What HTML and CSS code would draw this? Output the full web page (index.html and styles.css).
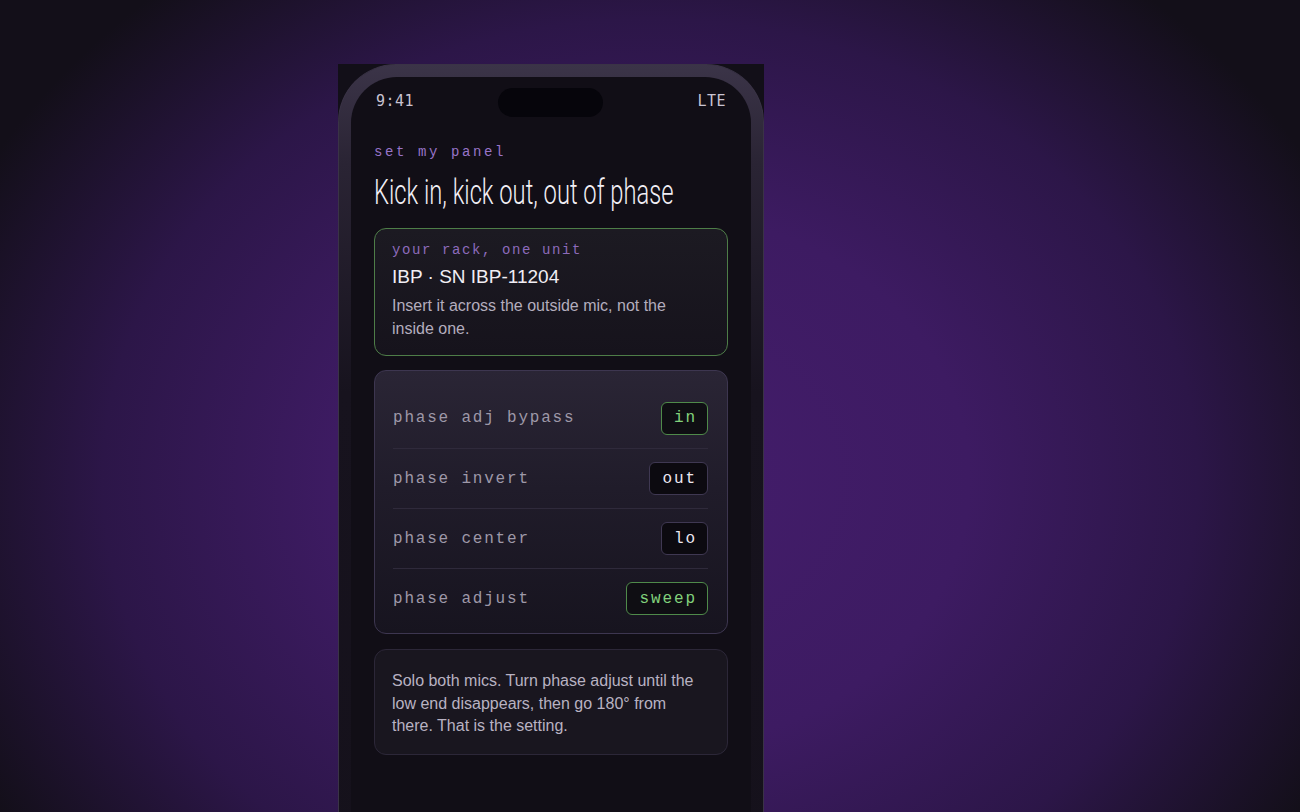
FILE: index.html
```html
<!DOCTYPE html>
<html lang="en">
<head>
<meta charset="utf-8">
<title>set my panel</title>
<link rel="stylesheet" href="styles.css">
</head>
<body>
<div class="stage">
  <div class="device">
    <div class="frame">
      <div class="screen">
        <div class="status">
          <span class="time">9:41</span>
          <span class="island"></span>
          <span class="net">LTE</span>
        </div>
        <div class="content">
          <div class="eyebrow">set my panel</div>
          <h1 class="title"><span class="title-text">Kick in, kick out, out of phase</span></h1>
          <section class="card unit">
            <div class="unit-label">your rack, one unit</div>
            <div class="unit-name">IBP · SN IBP-11204</div>
            <p class="unit-desc">Insert it across the outside mic, not the inside one.</p>
          </section>
          <section class="card controls">
            <div class="row"><span class="label">phase adj bypass</span><span class="pill on">in</span></div>
            <div class="row"><span class="label">phase invert</span><span class="pill">out</span></div>
            <div class="row"><span class="label">phase center</span><span class="pill">lo</span></div>
            <div class="row"><span class="label">phase adjust</span><span class="pill on">sweep</span></div>
          </section>
          <section class="card note">
            <p>Solo both mics. Turn phase adjust until the low end disappears, then go 180° from there. That is the setting.</p>
          </section>
        </div>
      </div>
    </div>
  </div>
</div>
</body>
</html>
```
FILE: styles.css
```css
* { box-sizing: border-box; }
html, body { margin: 0; padding: 0; }
body {
  width: 1300px;
  height: 812px;
  overflow: hidden;
  background: radial-gradient(ellipse 760px 640px at 650px 480px, #441d6c 0%, #3d1b62 42%, #2c1648 72%, #130f19 100%);
  font-family: "Liberation Sans", Arial, sans-serif;
}
.stage {
  padding: 64px 0 0 338px;
}
.device {
  width: 426px;
  height: 820px;
  background: #120f18;
}
.frame {
  height: 100%;
  border-radius: 58px 58px 0 0;
  padding: 12px 12px 0 12px;
  border: 1px solid #3a3346;
  border-bottom: none;
  background: linear-gradient(180deg, #3b3448 0%, #2a2434 12%, #17131e 40%, #15111b 100%);
}
.screen {
  height: 100%;
  border-radius: 46px 46px 0 0;
  background: #110e16;
  padding: 0 23px;
}
.status {
  display: grid;
  grid-template-columns: 1fr auto 1fr;
  align-items: center;
  height: 48px;
  padding: 0 2px 0 2px;
  font-family: "DejaVu Sans Mono", monospace;
  font-size: 15px;
  color: #c9c3d2;
  letter-spacing: 0.5px;
}
.net { justify-self: end; }
.island {
  width: 105px;
  height: 29px;
  border-radius: 15px;
  background: #06050b;
  margin-top: 2px;
  margin-left: -1px;
}
.content {
  padding-top: 18px;
}
.eyebrow {
  font-family: "Liberation Mono", monospace;
  font-size: 14px;
  letter-spacing: 2.6px;
  color: #9874c8;
  line-height: 18px;
}
.title {
  margin: 12px 0 15px 0;
  font-family: Roboto, sans-serif;
  font-weight: 300;
  font-size: 35px;
  line-height: 40px;
  color: #f2eff5;
  white-space: nowrap;
}
.title-text {
  display: inline-block;
  transform: scaleX(0.678);
  transform-origin: 0 50%;
}
.card {
  border-radius: 12px;
  width: 354px;
}
.unit {
  border: 1px solid #4e7d48;
  background: linear-gradient(180deg, #1c1a22 0%, #16131c 100%);
  padding: 12px 17px 15px 17px;
}
.unit-label {
  font-family: "Liberation Mono", monospace;
  font-size: 14px;
  line-height: 18px;
  letter-spacing: 1.6px;
  color: #8d6bbb;
}
.unit-name {
  margin-top: 6px;
  font-size: 19px;
  line-height: 24px;
  color: #f1eef4;
}
.unit-desc {
  margin: 5px 0 0 0;
  font-size: 16px;
  line-height: 23px;
  color: #b3adbd;
}
.controls {
  margin-top: 14px;
  border: 1px solid #3d3650;
  background: linear-gradient(180deg, #2a2535 0%, #201c2a 45%, #17141f 100%);
  padding: 17px 19px 5px 18px;
}
.row {
  display: flex;
  align-items: center;
  justify-content: space-between;
  height: 60px;
  border-top: 1px solid #2f2a3b;
}
.row:first-child { border-top: none; }
.label {
  font-family: "Liberation Mono", monospace;
  font-size: 16px;
  letter-spacing: 1.8px;
  color: #9e98a8;
}
.pill {
  display: inline-flex;
  align-items: center;
  height: 33px;
  padding: 0 10px 0 12px;
  border-radius: 6px;
  border: 1px solid #3f3852;
  background: #0c0a10;
  font-family: "Liberation Mono", monospace;
  font-size: 16px;
  letter-spacing: 1.9px;
  color: #ebe7f0;
}
.pill.on {
  border-color: #4f8a4a;
  color: #82d27c;
  background: #0f0e13;
}
.note {
  margin-top: 15px;
  border: 1px solid #2c2738;
  background: #19161f;
  padding: 20px 17px 16px 17px;
}
.note p {
  margin: 0;
  font-size: 16px;
  line-height: 22.5px;
  color: #b8b2c2;
}
```
